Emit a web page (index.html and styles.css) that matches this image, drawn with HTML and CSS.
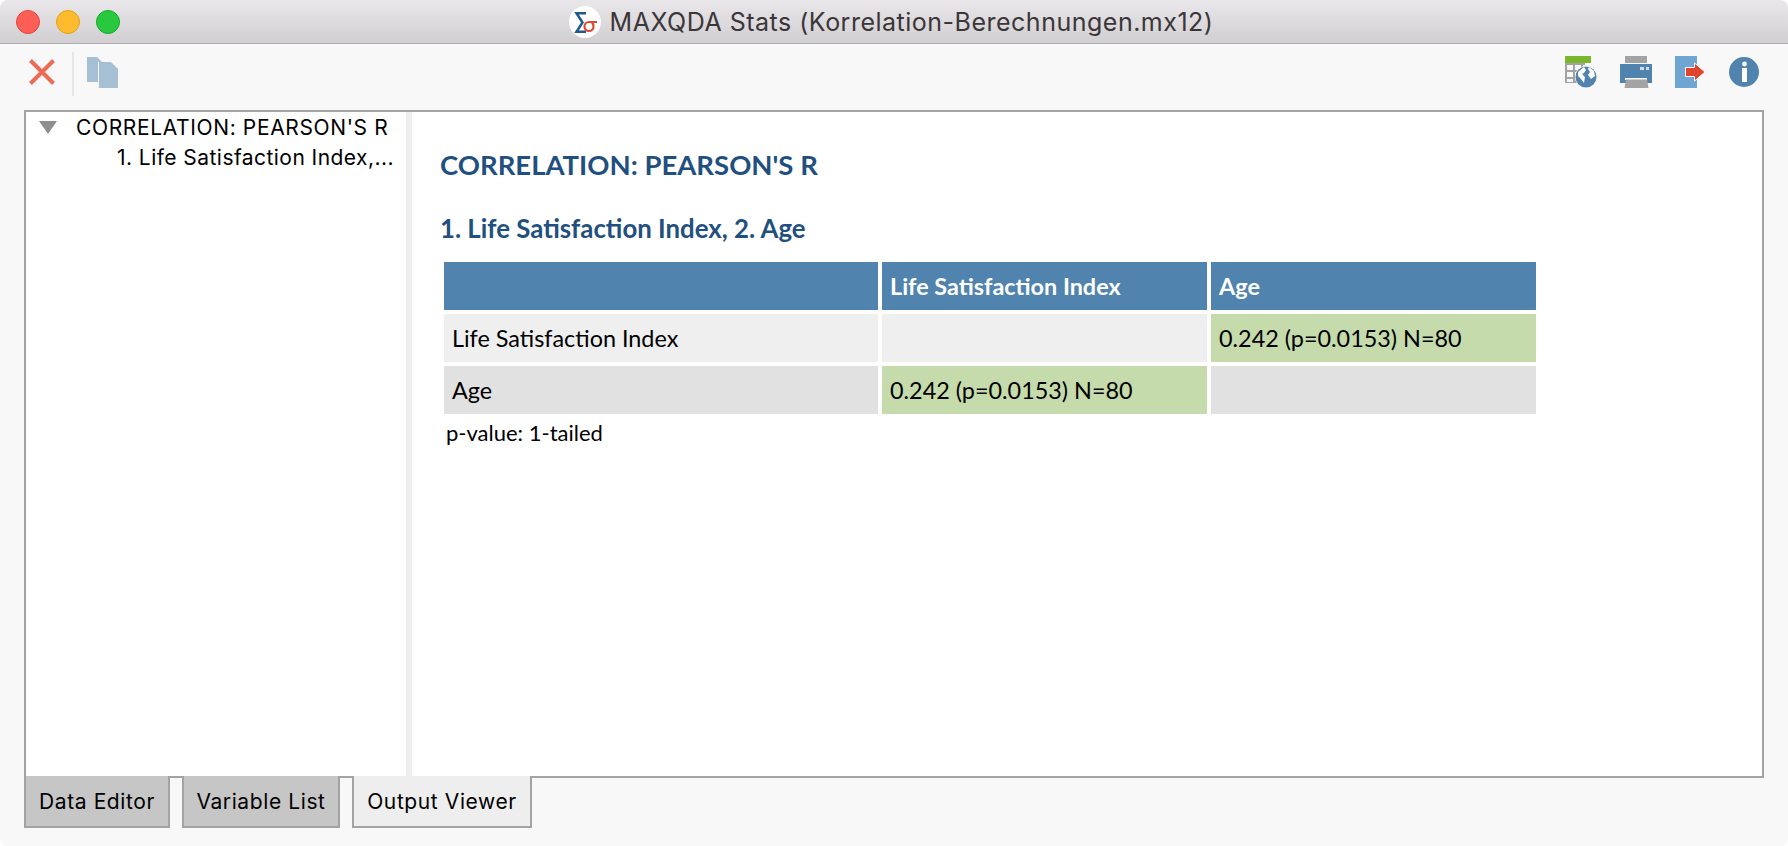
FILE: index.html
```html
<!DOCTYPE html>
<html lang="en">
<head>
  <meta charset="UTF-8">
  <meta name="viewport" content="width=device-width,initial-scale=1.0">
  <title>MAXQDA Stats</title>
  <link rel="stylesheet" href="styles.css">
</head>
<body>
  <div class="window">

    <div class="titlebar">
      <div class="lights">
        <span class="light light-red"></span>
        <span class="light light-yellow"></span>
        <span class="light light-green"></span>
      </div>
      <svg class="app-logo" width="32" height="32" viewBox="0 0 32 32">
        <circle cx="16" cy="16" r="16" fill="#fff"/>
        <path d="M17 7.200H7.500l6 9.300-6 9.300H17" fill="none" stroke="#1f5a8c" stroke-width="2.500"/>
        <path d="M28 16h-8a4.500 4.500 0 1 0 4.500 4.500c0-2-1-3.500-2-4.500" fill="none" stroke="#dd4a32" stroke-width="2.200"/>
      </svg>
      <span class="window-title">MAXQDA Stats (Korrelation-Berechnungen.mx12)</span>
    </div>

    <div class="toolbar">
      <svg class="tool-close" width="26" height="26" viewBox="0 0 26 26">
        <path d="M1.500 1.500l23 23M24.500 1.500l-23 23" stroke="#ef6a55" stroke-width="4" fill="none"/>
      </svg>
      <span class="tool-sep"></span>
      <svg class="tool-copy" width="31" height="31" viewBox="0 0 31 31">
        <path d="M0 0h10l5 5h-4v20H0z" fill="#a5bfd5"/>
        <path d="M12 5h12l7 7v19H12z" fill="#a5bfd5"/>
      </svg>
      <div class="tool-right">
        <svg width="32" height="32" viewBox="0 0 32 32">
          <path d="M0 0h26v7H0z" fill="#7ab72c"/>
          <path d="M0 7h20v20H0z" fill="#a3a3a3"/>
          <path d="M2 9h6v5H2zM10 9h6v5h-6zM18 9h6v5h-6zM2 16h6v5H2zM2 23h6v3H2zM10 16h6v5h-6z" fill="#f8f8f8"/>
          <circle cx="21" cy="21" r="11" fill="#fff"/>
          <circle cx="21" cy="21" r="10.500" fill="#5083ae"/>
          <path d="M13 16l6-5 2 3-2 3-2 1 3 3-1 6-3-4-3-3zM24 11l5 4 1 5-4 3-3-4 2-3-2-3z" fill="#fff"/>
        </svg>
        <svg width="32" height="32" viewBox="0 0 32 32">
          <path d="M5 0h22v7H5z" fill="#a3a3a3"/>
          <path d="M0 8h32v19H0z" fill="#5083ae"/>
          <path d="M20 11h4v3h-4zM26 11h3v3h-3z" fill="#cfdce8"/>
          <path d="M5 22h22v2H5z" fill="#f8f8f8"/>
          <path d="M6 23.500h21l1.500 8.500H4.500z" fill="#a3a3a3"/>
        </svg>
        <svg width="31" height="32" viewBox="0 0 31 32">
          <path d="M0 0h22v32H0z" fill="#6fa5d2"/>
          <path d="M10.500 11.500h9V7l10.500 9-10.500 9v-4.500h-9z" fill="#e0432c" stroke="#fff" stroke-width="1"/>
        </svg>
        <svg width="30" height="30" viewBox="0 0 30 30">
          <circle cx="15" cy="15" r="15" fill="#5083ae"/>
          <circle cx="15.500" cy="7" r="2.400" fill="#fff"/>
          <path d="M13 11h5v14h-5z" fill="#fff"/>
        </svg>
      </div>
    </div>

    <div class="workspace">
      <div class="panel">
        <div class="tree">
          <div class="tree-row">
            <svg class="tree-arrow" width="18" height="13" viewBox="0 0 18 13"><path d="M0 0h18l-9 13z" fill="#8e8e8e"/></svg>
            <span>CORRELATION: PEARSON'S R</span>
          </div>
          <div class="tree-row tree-child">1. Life Satisfaction Index,...</div>
        </div>
        <div class="splitter"></div>
        <div class="output">
          <h1>CORRELATION: PEARSON'S R</h1>
          <h2>1. Life Satisfaction Index, 2. Age</h2>
          <table class="result">
            <thead>
              <tr><th></th><th>Life Satisfaction Index</th><th>Age</th></tr>
            </thead>
            <tbody>
              <tr class="row-light"><td>Life Satisfaction Index</td><td></td><td class="hit">0.242 (p=0.0153) N=80</td></tr>
              <tr class="row-dark"><td>Age</td><td class="hit">0.242 (p=0.0153) N=80</td><td></td></tr>
            </tbody>
          </table>
          <p class="note">p-value: 1-tailed</p>
        </div>
      </div>

      <div class="tabs">
        <div class="tab tab-data">Data Editor</div>
        <div class="tab tab-vars">Variable List</div>
        <div class="tab tab-active">Output Viewer</div>
      </div>
    </div>

  </div>
</body>
</html>
```

FILE: styles.css
```css
html, body {
  margin: 0;
  padding: 0;
  background: #fff;
}

.window {
  display: flex;
  flex-direction: column;
  height: 846px;
  background: #f8f8f8;
  border-radius: 8px;
  overflow: hidden;
}

/* title bar */
.titlebar {
  position: relative;
  display: flex;
  justify-content: center;
  align-items: center;
  gap: 9px;
  flex: none;
  height: 43px;
  padding-right: 6px;
  background: linear-gradient(#e9e7e9, #d1cfd2);
  border-bottom: 1px solid #aeacae;
}

.lights {
  position: absolute;
  top: 10px;
  left: 16px;
  display: flex;
  gap: 16px;
}

.light {
  width: 24px;
  height: 24px;
  box-sizing: border-box;
  border-radius: 50%;
  border: 1px solid;
}

.light-red { background: #fd5f57; border-color: #e2463f; }
.light-yellow { background: #febb2e; border-color: #e1a118; }
.light-green { background: #29c83f; border-color: #13ac2a; }

.app-logo {
  flex: none;
}

.window-title {
  font-family: Inter, "Liberation Sans", sans-serif;
  font-size: 25px;
  letter-spacing: 0.5px;
  color: #3b3639;
  white-space: nowrap;
}

/* toolbar */
.toolbar {
  display: flex;
  align-items: center;
  flex: none;
  box-sizing: border-box;
  height: 66px;
  padding: 0 29px 10px;
}

.tool-sep {
  width: 2px;
  height: 44px;
  margin: 4px 13px 0 17px;
  background: #e6e6e6;
}

.tool-right {
  display: flex;
  align-items: center;
  gap: 23px;
  margin-left: auto;
}

/* main panel */
.workspace {
  display: flex;
  flex-direction: column;
  flex: 1;
  min-height: 0;
  padding: 0 24px 18px;
}

.panel {
  display: flex;
  flex: 1;
  min-height: 0;
  background: #fff;
  border: 2px solid #a3a3a3;
}

.tree {
  flex: none;
  width: 380px;
  font-family: Inter, "Liberation Sans", sans-serif;
  font-size: 21px;
  letter-spacing: 0.63px;
  color: #000;
}

.tree-row {
  display: flex;
  align-items: center;
  height: 30px;
  padding-left: 13px;
  gap: 19px;
  white-space: nowrap;
}

.tree-child {
  padding-left: 91px;
  letter-spacing: 0.45px;
}

.tree-arrow {
  flex: none;
}

.splitter {
  flex: none;
  width: 6px;
  background: #eeeeee;
}

.output {
  flex: 1;
  padding: 37px 0 0 28px;
  font-family: Lato, "Liberation Sans", sans-serif;
  color: #000;
}

.output h1 {
  margin: 0;
  font-size: 27.5px;
  line-height: 32px;
  font-weight: 700;
  color: #1f5080;
}

.output h2 {
  margin: 33px 0 0;
  font-size: 25.8px;
  line-height: 28px;
  font-weight: 700;
  color: #1f5080;
}

.result {
  table-layout: fixed;
  width: 1100px;
  margin-top: 16px;
  border-collapse: separate;
  border-spacing: 4px;
  font-size: 23.4px;
}

.result th:nth-child(1) { width: 434px; }
.result th:nth-child(2) { width: 325px; }
.result th:nth-child(3) { width: 325px; }

.result th,
.result td {
  height: 48px;
  padding: 0 8px;
  box-sizing: border-box;
  text-align: left;
  white-space: nowrap;
}

.result th {
  background: #5083ae;
  color: #fff;
  font-weight: 700;
}

.row-light td { background: #efefef; }
.row-dark td { background: #e1e1e1; }
.result td.hit { background: #c6dbab; }

.note {
  margin: 3px 0 0 6px;
  font-size: 22px;
  line-height: 24px;
}

/* tabs under the panel */
.tabs {
  display: flex;
  flex: none;
  gap: 12px;
  height: 52px;
  margin-top: -2px;
}

.tab {
  display: flex;
  justify-content: center;
  align-items: center;
  box-sizing: border-box;
  height: 52px;
  border: 2px solid #a3a3a3;
  border-top: 0;
  background: #c6c6c6;
  font-family: Inter, "Liberation Sans", sans-serif;
  font-size: 21px;
  letter-spacing: 0.6px;
  color: #000;
}

.tab-data { width: 146px; }
.tab-vars { width: 158px; }
.tab-active { width: 180px; background: #eeeeee; }
```
